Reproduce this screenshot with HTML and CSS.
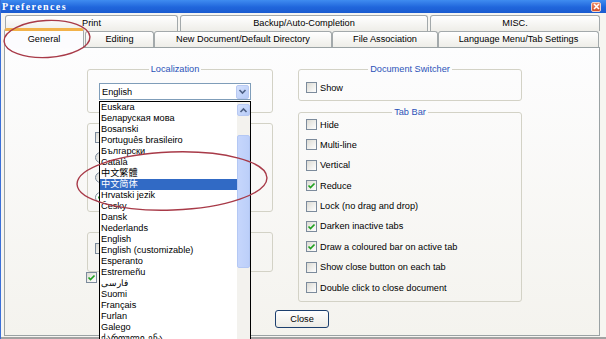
FILE: index.html
```html
<!DOCTYPE html>
<html>
<head>
    <link rel="stylesheet" href="styles.css">
</head>
<body>
    <div class="window">
        <div class="titlebar">
            <span class="title">Preferences</span>
            <span class="title-close">
                <svg width="7" height="7" viewBox="0 0 7 7"><path d="M1 1 L6 6 M6 1 L1 6" stroke="#fff" stroke-width="1.6"/></svg>
            </span>
        </div>

        <div class="tabs">
            <div class="tab-row">
                <div class="tab tab-print">Print</div>
                <div class="tab tab-backup">Backup/Auto-Completion</div>
                <div class="tab tab-misc">MISC.</div>
            </div>
            <div class="tab-row tab-row-front">
                <div class="tab tab-general selected">General</div>
                <div class="tab tab-editing">Editing</div>
                <div class="tab tab-newdoc">New Document/Default Directory</div>
                <div class="tab tab-assoc">File Association</div>
                <div class="tab tab-lang">Language Menu/Tab Settings</div>
            </div>
        </div>

        <div class="panel">
            <div class="columns">
                <div class="col">
                    <fieldset class="group group-loc">
                        <legend>Localization</legend>
                        <div class="combo">
                            <span class="combo-value">English</span>
                            <span class="scroll-btn">
                                <svg width="9" height="9" viewBox="0 0 9 9"><path d="M1.5 3 L4.5 6 L7.5 3" fill="none" stroke="#4d6185" stroke-width="1.6"/></svg>
                            </span>
                        </div>
                    </fieldset>

                    <fieldset class="group group-hidden">
                        <div class="check-list">
                            <span class="box"></span>
                            <span class="radio"></span>
                            <span class="radio"></span>
                            <span class="radio on"></span>
                        </div>
                    </fieldset>

                    <fieldset class="group group-hidden2">
                        <span class="box"></span>
                    </fieldset>

                    <div class="check-row outside">
                        <span class="box">
                            <svg width="9" height="9" viewBox="0 0 9 9"><path d="M1.5 4.5 L3.5 6.5 L7.5 2.5" fill="none" stroke="#21a121" stroke-width="1.7"/></svg>
                        </span>
                    </div>
                </div>

                <div class="col">
                    <fieldset class="group group-switcher">
                        <legend>Document Switcher</legend>
                        <label class="check-row"><span class="box"></span>Show</label>
                    </fieldset>

                    <fieldset class="group group-tabbar">
                        <legend>Tab Bar</legend>
                        <div class="check-list wide">
                            <label class="check-row"><span class="box"></span>Hide</label>
                            <label class="check-row"><span class="box"></span>Multi-line</label>
                            <label class="check-row"><span class="box"></span>Vertical</label>
                            <label class="check-row"><span class="box"><svg width="9" height="9" viewBox="0 0 9 9"><path d="M1.5 4.5 L3.5 6.5 L7.5 2.5" fill="none" stroke="#21a121" stroke-width="1.7"/></svg></span>Reduce</label>
                            <label class="check-row"><span class="box"></span>Lock (no drag and drop)</label>
                            <label class="check-row"><span class="box"><svg width="9" height="9" viewBox="0 0 9 9"><path d="M1.5 4.5 L3.5 6.5 L7.5 2.5" fill="none" stroke="#21a121" stroke-width="1.7"/></svg></span>Darken inactive tabs</label>
                            <label class="check-row"><span class="box"><svg width="9" height="9" viewBox="0 0 9 9"><path d="M1.5 4.5 L3.5 6.5 L7.5 2.5" fill="none" stroke="#21a121" stroke-width="1.7"/></svg></span>Draw a coloured bar on active tab</label>
                            <label class="check-row"><span class="box"></span>Show close button on each tab</label>
                            <label class="check-row"><span class="box"></span>Double click to close document</label>
                        </div>
                    </fieldset>
                </div>
            </div>

            <div class="actions">
                <button type="button" class="btn">Close</button>
            </div>

            <!-- open language dropdown -->
            <div class="dropdown">
                <ul class="options">
                    <li>Euskara</li>
                    <li>Беларуская мова</li>
                    <li>Bosanski</li>
                    <li>Português brasileiro</li>
                    <li>Български</li>
                    <li>Català</li>
                    <li>中文繁體</li>
                    <li class="active">中文简体</li>
                    <li>Hrvatski jezik</li>
                    <li>Česky</li>
                    <li>Dansk</li>
                    <li>Nederlands</li>
                    <li>English</li>
                    <li>English (customizable)</li>
                    <li>Esperanto</li>
                    <li>Estremeñu</li>
                    <li>فارسی</li>
                    <li>Suomi</li>
                    <li>Français</li>
                    <li>Furlan</li>
                    <li>Galego</li>
                    <li>ქართული ენა</li>
                </ul>
                <div class="scrollbar">
                    <span class="scroll-btn">
                        <svg width="9" height="9" viewBox="0 0 9 9"><path d="M1.5 6 L4.5 3 L7.5 6" fill="none" stroke="#4d6185" stroke-width="1.6"/></svg>
                    </span>
                    <span class="thumb"></span>
                </div>
            </div>
        </div>

        <div class="bottom-line"></div>

        <!-- red marker circles drawn over the screenshot -->
        <svg class="marks" width="606" height="339" viewBox="0 0 606 339">
            <ellipse cx="47" cy="39" rx="43" ry="18.5" fill="none" stroke="#a83a48" stroke-width="1.4" transform="rotate(-3 47 39)"/>
            <ellipse cx="172" cy="181" rx="95" ry="29" fill="none" stroke="#a83a48" stroke-width="1.4" transform="rotate(-2 172 181)"/>
        </svg>
    </div>
</body>
</html>
```

FILE: styles.css
```css
* {
    box-sizing: border-box;
}

body {
    margin: 0;
    font-family: "Liberation Sans", Arial, "Noto Sans CJK SC", sans-serif;
    font-size: 9.2px;
    color: #000;
    background: #fff;
}

.window {
    position: relative;
    width: 606px;
    height: 339px;
    overflow: hidden;
    background: #f6f5f1;
    border-left: 1px solid #3a6fd8;
}

/* title bar */
.titlebar {
    height: 13px;
    display: flex;
    align-items: center;
    justify-content: space-between;
    padding: 0 5px 0 1px;
    background: linear-gradient(#3f8cf0, #2066dc 55%, #1a5bd0);
}

.title {
    color: #fff;
    font-family: "Liberation Serif", serif;
    font-weight: bold;
    font-size: 10px;
    letter-spacing: 1.4px;
}

.title-close {
    width: 10px;
    height: 10px;
    display: flex;
    align-items: center;
    justify-content: center;
    border: 1px solid #f3d3c8;
    border-radius: 2px;
    background: linear-gradient(#ee8a68, #d4502c);
}

/* tabs */
.tabs {
    padding: 2px 0 0 3px;
}

.tab-row {
    display: flex;
    height: 16px;
    padding-left: 1px;
}

.tab-row-front {
    padding-left: 0;
    align-items: flex-end;
}

.tab {
    height: 16px;
    line-height: 15px;
    text-align: center;
    border: 1px solid #a3a9ab;
    border-bottom: none;
    border-radius: 3px 3px 0 0;
    background: linear-gradient(#ffffff, #eeede8);
    white-space: nowrap;
}

.tab-print { width: 173px; margin-right: 2px; }
.tab-backup { width: 248px; margin-right: 2px; }
.tab-misc { width: 170px; }
.tab-general { width: 80px; }
.tab-editing { width: 69px; margin-left: 1px; }
.tab-newdoc { width: 178px; }
.tab-assoc { width: 106px; }
.tab-lang { width: 161px; }

.tab.selected {
    position: relative;
    z-index: 2;
    height: 20px;
    margin-bottom: -1px;
    line-height: 16px;
    border-top: 3px solid #f2b24a;
    background: #fcfcfe;
}

/* main page */
.panel {
    position: relative;
    width: 596px;
    height: 289px;
    margin-left: 3px;
    padding: 16px 0 0 82px;
    border: 1px solid #9aa2a4;
    background: linear-gradient(#fdfdfe, #f4f3ee);
}

.columns {
    display: grid;
    grid-template-columns: 186px 224px;
    column-gap: 25px;
    align-items: start;
}

.col {
    display: flex;
    flex-direction: column;
}

.group {
    margin: 0;
    min-width: 0;
    border: 1px solid #d3d2c6;
    border-radius: 3px;
}

.group legend {
    margin: 0 auto;
    padding: 0 2px;
    line-height: 11px;
    color: #2a52b8;
}

.group-loc {
    padding: 8px 21px 12px 11px;
}

.group-hidden {
    margin-top: 10px;
    padding: 8px 7px 8px 7px;
}

.group-hidden2 {
    margin-top: 20px;
    padding: 10px 7px 17px 7px;
}

.group-switcher {
    padding: 7px 7px 7px 7px;
}

.group-tabbar {
    margin-top: 6px;
    padding: 1px 7px 8px 7px;
}

.check-list {
    display: flex;
    flex-direction: column;
    gap: 9px;
}

.check-list.wide {
    gap: 9.4px;
}

.check-row {
    display: flex;
    align-items: center;
    gap: 3px;
    height: 11px;
    white-space: nowrap;
}

.check-row.outside {
    margin-left: -1px;
}

.box,
.radio {
    display: flex;
    align-items: center;
    justify-content: center;
    width: 11px;
    height: 11px;
    flex: none;
    border: 1px solid #7c8b9c;
    background: linear-gradient(135deg, #dcdbd4, #ffffff);
}

.radio {
    border-radius: 50%;
}

.radio.on {
    background: radial-gradient(circle, #36a336 0 2px, #ffffff 2.5px);
}

/* combo box */
.combo {
    display: flex;
    align-items: center;
    justify-content: space-between;
    height: 17px;
    padding: 0 1px 0 2px;
    border: 1px solid #7f9db9;
    background: #fff;
}

.scroll-btn {
    display: flex;
    align-items: center;
    justify-content: center;
    width: 13px;
    height: 14px;
    border: 1px solid #b8c9f2;
    border-radius: 2px;
    background: linear-gradient(135deg, #d5e1fd, #b6cbf7);
}

/* dropdown list */
.dropdown {
    position: absolute;
    z-index: 5;
    left: 94px;
    top: 53px;
    width: 152px;
    height: 245px;
    display: flex;
    border: 1px solid #000;
    background: #fff;
}

.options {
    flex: 1;
    margin: 0;
    padding: 0;
    list-style: none;
}

.options li {
    height: 11px;
    line-height: 11px;
    padding-left: 1px;
    white-space: nowrap;
}

.options li.active {
    background: #316ac5;
    color: #fff;
}

.scrollbar {
    position: relative;
    width: 13px;
    padding-top: 2px;
    background: #f3f2ee;
}

.scrollbar .scroll-btn {
    height: 12px;
}

.thumb {
    position: absolute;
    left: 0;
    top: 33px;
    width: 13px;
    height: 133px;
    border: 1px solid #b4c8f4;
    border-radius: 2px;
    background: linear-gradient(90deg, #c6d6fc, #bccff9);
}

/* buttons */
.actions {
    display: flex;
    justify-content: center;
    width: 594px;
    margin-left: -82px;
    margin-top: 8px;
}

.btn {
    width: 54px;
    height: 18px;
    padding: 0;
    font-family: inherit;
    font-size: 9.2px;
    border: 1px solid #1c3f6e;
    border-radius: 3px;
    background: linear-gradient(#ffffff, #ecebe5);
}

.bottom-line {
    position: relative;
    z-index: 1;
    height: 2px;
    margin-top: 1px;
    background: #a2a2a2;
}

.marks {
    position: absolute;
    z-index: 10;
    left: -1px;
    top: 0;
    pointer-events: none;
}
```
